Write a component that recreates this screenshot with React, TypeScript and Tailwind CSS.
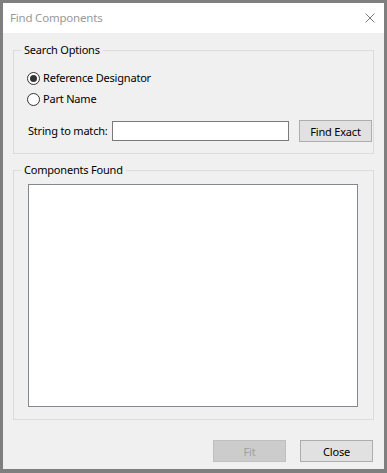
import React, { useState } from "react";

const font = { fontFamily: '"Noto Sans", "Liberation Sans", sans-serif' };

function Radio({ checked, label, onClick }: { checked: boolean; label: string; onClick: () => void }) {
  return (
    <div className="flex items-center h-[16px] cursor-default" onClick={onClick}>
      <span className="w-[13px] h-[13px] rounded-full border border-[#333333] bg-white flex items-center justify-center">
        {checked && <span className="w-[7px] h-[7px] rounded-full bg-[#333333]" />}
      </span>
      <span className="ml-[3px]">{label}</span>
    </div>
  );
}

export default function App() {
  const [mode, setMode] = useState<"ref" | "part">("ref");
  const [text, setText] = useState("");

  return (
    <div
      className="w-[387px] h-[473px] bg-[#7f7f7f] pt-[3px] pl-[3px] pr-[3px] pb-[4px] flex flex-col text-[11px] tracking-[-0.2px] whitespace-nowrap text-black"
      style={font}
    >
      {/* title bar */}
      <div className="h-[30px] bg-white flex items-center justify-between pl-[7px] pr-[9px]">
        <span className="text-[#999999] text-[11.5px] leading-[16px]">Find Components</span>
        <svg width="10" height="10" viewBox="0 0 10 10">
          <path d="M0.5 0.5 L9.5 9.5 M9.5 0.5 L0.5 9.5" stroke="#7a7a7a" strokeWidth="1" />
        </svg>
      </div>

      {/* body */}
      <div className="flex-1 bg-[#f0f0f0] flex flex-col px-[10px] pt-[9px]">
        <fieldset className="border border-[#dcdcdc] pl-[7px] pr-px pb-[11px]">
          <legend className="px-[3px] leading-[16px]">Search Options</legend>
          <div className="pl-[6px] pt-[12px] flex flex-col">
            <Radio checked={mode === "ref"} label="Reference Designator" onClick={() => setMode("ref")} />
            <div className="mt-[5px]">
              <Radio checked={mode === "part"} label="Part Name" onClick={() => setMode("part")} />
            </div>
            <div className="mt-[13px] flex items-center h-[22px]">
              <span className="ml-px w-[84px]">String to match:</span>
              <input
                value={text}
                onChange={(e) => setText(e.target.value)}
                className="w-[177px] h-[20px] bg-white border border-[#7a7a7a] outline-none px-1 text-[11px]"
              />
              <button className="ml-auto w-[73px] h-[22px] bg-[#e1e1e1] border border-[#adadad] leading-none">
                Find Exact
              </button>
            </div>
          </div>
        </fieldset>

        <fieldset className="mt-[8px] border border-[#dcdcdc] pl-[7px] pr-px pb-[12px]">
          <legend className="px-[3px] leading-[16px]">Components Found</legend>
          <div className="pt-[6px] pl-[7px]">
            <div className="w-[330px] h-[223px] bg-white border border-[#828790]" />
          </div>
        </fieldset>

        <div className="mt-[20px] flex justify-end gap-[14px] pr-px">
          <button
            disabled
            className="w-[73px] h-[22px] bg-[#cccccc] border border-[#bfbfbf] text-[#a0a0a0] leading-none"
          >
            Fit
          </button>
          <button className="w-[73px] h-[22px] bg-[#e1e1e1] border border-[#adadad] leading-none">Close</button>
        </div>
      </div>
    </div>
  );
}
